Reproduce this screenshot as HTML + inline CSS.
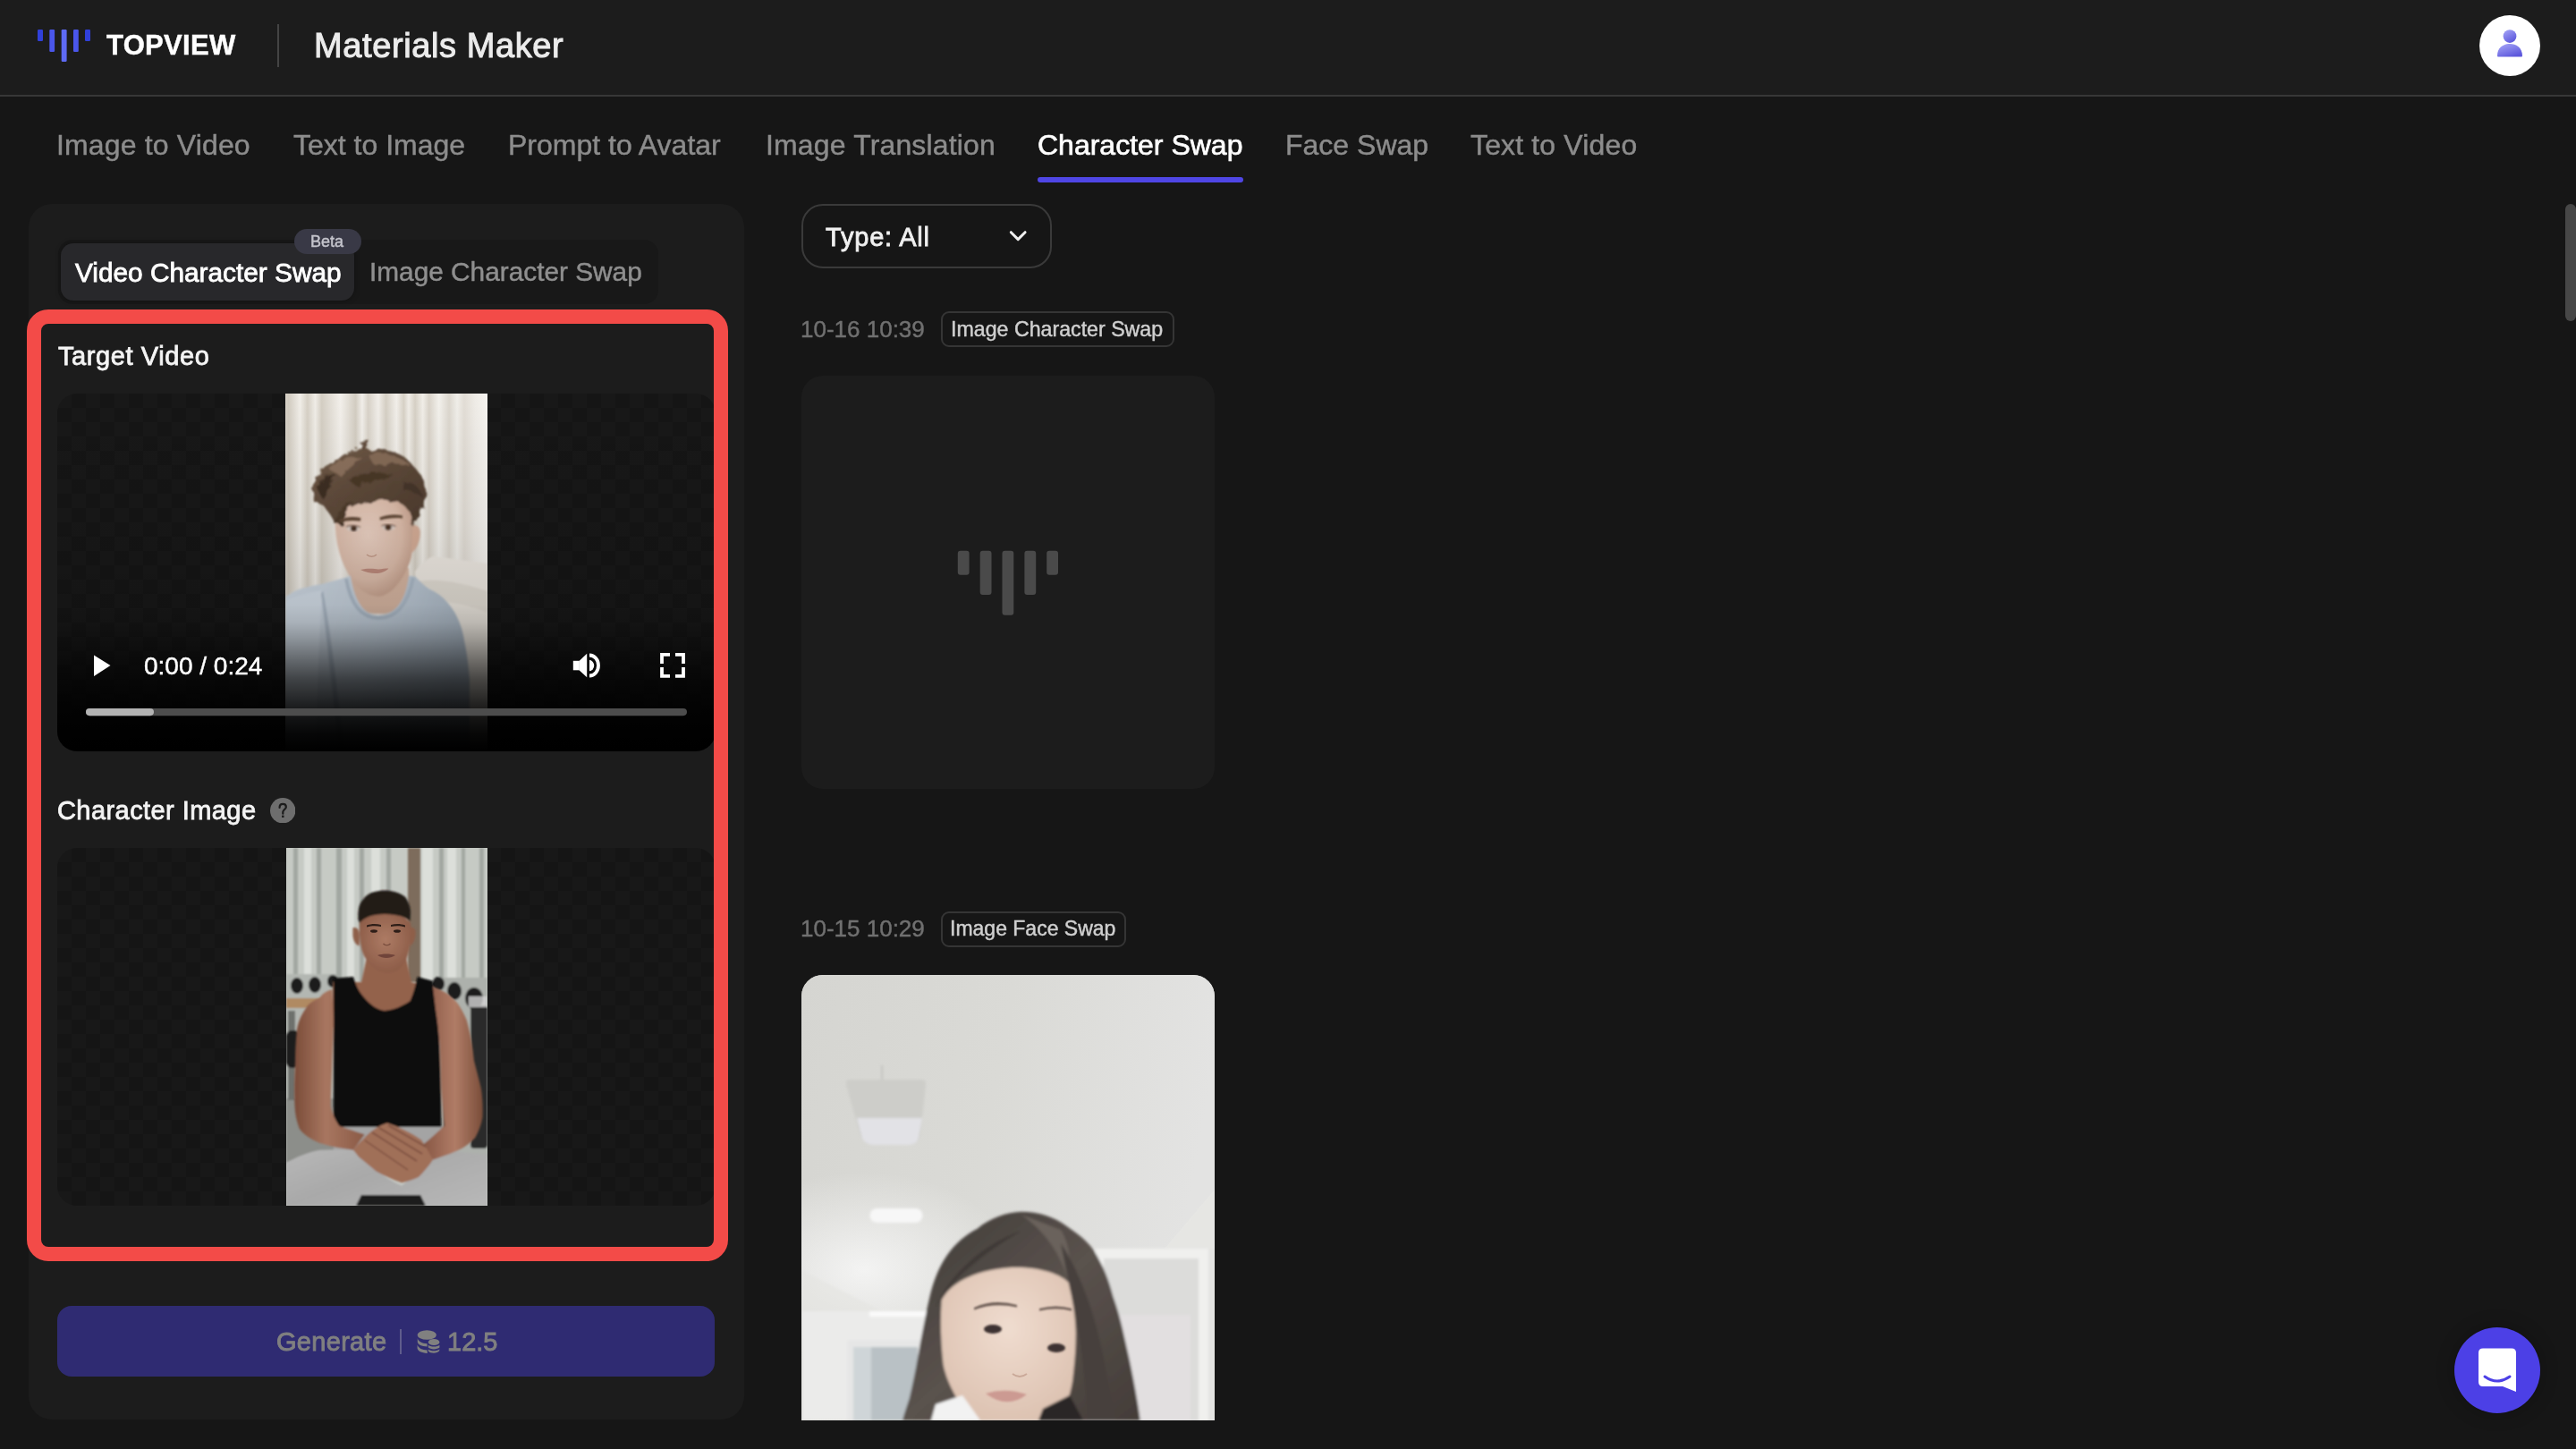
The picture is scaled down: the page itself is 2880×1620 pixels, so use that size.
<!DOCTYPE html>
<html><head><meta charset="utf-8">
<style>
*{margin:0;padding:0;box-sizing:border-box}
html,body{width:2880px;height:1620px;overflow:hidden;background:#161616;font-family:"Liberation Sans",sans-serif;color:#fff;-webkit-font-smoothing:antialiased}
.t{will-change:transform;-webkit-text-stroke-width:0.45px}
.a{position:absolute}
.t{position:absolute;white-space:nowrap;line-height:1}
#hdr{left:0;top:0;width:2880px;height:108px;background:#1c1c1c;border-bottom:2px solid #373737}
#panel{left:32px;top:228px;width:800px;height:1359px;background:#1c1c1c;border-radius:26px}
#seg{left:65px;top:268px;width:671px;height:72px;background:#181818;border-radius:16px}
#segact{left:68px;top:272px;width:328px;height:64px;background:#28282b;border-radius:14px;box-shadow:0 0 6px rgba(0,0,0,.35)}
#beta{left:329px;top:256px;width:75px;height:28px;background:#393946;border-radius:14px}
#red{left:30px;top:346px;width:784px;height:1064px;border:16px solid #f34b48;border-radius:24px}
.vbox{left:64px;width:736px;height:400px;border-radius:22px;overflow:hidden;background-color:#161616;background-image:conic-gradient(#151515 0deg 90deg,#181818 90deg 180deg,#151515 180deg 270deg,#181818 270deg 360deg);background-size:32px 32px;background-position:0 0}
#gen{left:64px;top:1460px;width:735px;height:79px;background:#2f2b72;border-radius:16px}
#dd{left:896px;top:228px;width:280px;height:72px;border:2px solid #3a3a3a;border-radius:24px}
.badge{height:40px;border:2px solid #353535;border-radius:9px}
#card1{left:896px;top:420px;width:462px;height:462px;background:#1c1c1c;border-radius:24px}
#card2{left:896px;top:1090px;width:462px;height:498px;border-radius:24px 24px 0 0;overflow:hidden;background:#dcdcd8}
#scroll{left:2868px;top:228px;width:12px;height:131px;background:#474747;border-radius:6px}
#chat{left:2744px;top:1484px;width:96px;height:96px;border-radius:50%;background:#4c40e6;box-shadow:0 0 20px rgba(0,0,0,.25)}
#avatar{left:2772px;top:17px;width:68px;height:68px;border-radius:50%;background:#fff}
</style></head><body>
<div id="hdr" class="a"></div>
<!-- logo -->
<svg class="a" style="left:0;top:0" width="110" height="80" viewBox="0 0 110 80">
<rect x="42" y="33" width="6" height="13" rx="1.2" fill="#3040da"/>
<rect x="55.3" y="33" width="5.8" height="25" rx="1.2" fill="#4a56ea"/>
<rect x="68.7" y="33" width="5.9" height="36" rx="1.2" fill="#5e6af5"/>
<rect x="82" y="33" width="5.8" height="25" rx="1.2" fill="#4a56ea"/>
<rect x="95" y="33" width="6" height="13" rx="1.2" fill="#3040da"/>
</svg>
<div class="t" style="left:118.5px;top:35px;font-size:31px;font-weight:700;letter-spacing:0.3px">TOPVIEW</div>
<div class="a" style="left:310px;top:27px;width:2px;height:48px;background:#444"></div>
<div class="t" style="left:351px;top:32px;font-size:38px;letter-spacing:0.6px;-webkit-text-stroke:1px #ececec;color:#ececec">Materials Maker</div>
<div id="avatar" class="a"></div>
<svg class="a" style="left:2772px;top:17px" width="68" height="68" viewBox="0 0 68 68">
<defs><linearGradient id="av" x1="0" y1="0" x2="0.6" y2="1"><stop offset="0" stop-color="#a8a8f8"/><stop offset="1" stop-color="#5d58dc"/></linearGradient></defs>
<circle cx="34" cy="23.6" r="7.4" fill="url(#av)"/>
<path d="M20 45.5 C20 36 27 32 34 32 C41 32 48 36 48 45.5 Q48 46.5 47 46.5 L21 46.5 Q20 46.5 20 45.5Z" fill="url(#av)"/>
</svg>

<!-- nav tabs -->
<div class="t" style="left:63px;top:146px;font-size:32px;letter-spacing:0.15px;color:#8c8c8c">Image to Video</div>
<div class="t" style="left:328px;top:146px;font-size:32px;color:#8c8c8c">Text to Image</div>
<div class="t" style="left:568px;top:146px;font-size:32px;color:#8c8c8c">Prompt to Avatar</div>
<div class="t" style="left:855.5px;top:146px;font-size:32px;letter-spacing:0.15px;color:#8c8c8c">Image Translation</div>
<div class="t" style="left:1160px;top:146px;font-size:32px;-webkit-text-stroke-width:0.7px;color:#fff">Character Swap</div>
<div class="t" style="left:1437px;top:146px;font-size:32px;color:#8c8c8c">Face Swap</div>
<div class="t" style="left:1644px;top:146px;font-size:32px;color:#8c8c8c;letter-spacing:0.15px">Text to Video</div>
<div class="a" style="left:1160px;top:198px;width:230px;height:6px;background:#4f46e5;border-radius:3px"></div>

<div id="panel" class="a"></div>
<div id="seg" class="a"></div>
<div id="segact" class="a"></div>
<div class="t" style="left:83.5px;top:290px;font-size:29.8px;-webkit-text-stroke-width:0.8px;color:#fff">Video Character Swap</div>
<div class="t" style="left:413px;top:289px;font-size:29.8px;color:#8f8f8f">Image Character Swap</div>
<div id="beta" class="a"></div>
<div class="t" style="left:346.5px;top:261px;font-size:18px;color:#c4c4cc">Beta</div>

<div class="t" style="left:65px;top:384px;font-size:29px;letter-spacing:0.6px;-webkit-text-stroke-width:0.8px;color:#f4f4f4">Target Video</div>
<div class="a vbox" style="top:440px">
 <svg class="a" style="left:255px;top:0" width="226" height="400" viewBox="0 0 226 400">
  <defs>
   <linearGradient id="cur" x1="0" x2="226" y1="0" y2="0" gradientUnits="userSpaceOnUse">
    <stop offset="0" stop-color="#d8d2c8"/><stop offset="0.016" stop-color="#d2ccc1"/><stop offset="0.073" stop-color="#f1eee8"/>
    <stop offset="0.11" stop-color="#d6d0c5"/><stop offset="0.148" stop-color="#f0ede7"/><stop offset="0.18" stop-color="#d4cec3"/>
    <stop offset="0.273" stop-color="#f3f0eb"/><stop offset="0.348" stop-color="#d3cdc2"/><stop offset="0.38" stop-color="#f2efea"/>
    <stop offset="0.41" stop-color="#d8d2c8"/><stop offset="0.46" stop-color="#f1eee9"/><stop offset="0.498" stop-color="#d5cfc4"/>
    <stop offset="0.55" stop-color="#f2efea"/><stop offset="0.586" stop-color="#d7d1c6"/><stop offset="0.61" stop-color="#f0ede7"/>
    <stop offset="0.642" stop-color="#d6d0c5"/><stop offset="0.68" stop-color="#f1eee8"/><stop offset="0.711" stop-color="#d9d3c9"/>
    <stop offset="0.76" stop-color="#f3f1ec"/><stop offset="0.81" stop-color="#dcd7ce"/><stop offset="0.85" stop-color="#f0eee9"/>
    <stop offset="0.885" stop-color="#e2ddd5"/><stop offset="0.94" stop-color="#efece7"/><stop offset="1" stop-color="#f6f4f0"/>
   </linearGradient>
   <linearGradient id="shirt" x1="0" y1="0" x2="1" y2="0.3"><stop offset="0" stop-color="#d0dae4"/><stop offset="0.55" stop-color="#c0ccd8"/><stop offset="1" stop-color="#a6b3c0"/></linearGradient>
   <radialGradient id="face1" cx="0.42" cy="0.42" r="0.65"><stop offset="0" stop-color="#e9d0c2"/><stop offset="0.65" stop-color="#dcbcaa"/><stop offset="1" stop-color="#c09a86"/></radialGradient>
   <linearGradient id="hair1" x1="0" y1="0" x2="1" y2="1"><stop offset="0" stop-color="#735c4a"/><stop offset="0.45" stop-color="#5e4a3a"/><stop offset="1" stop-color="#4c3a2c"/></linearGradient>
   <filter id="bl1" x="-10%" y="-10%" width="120%" height="120%"><feGaussianBlur stdDeviation="0.9"/></filter>
   <filter id="bl1b" x="-10%" y="-10%" width="120%" height="120%"><feGaussianBlur stdDeviation="1.2"/></filter><filter id="hairf" x="-20%" y="-20%" width="140%" height="140%"><feTurbulence type="fractalNoise" baseFrequency="0.12" numOctaves="2" seed="3"/><feDisplacementMap in="SourceGraphic" scale="7"/><feGaussianBlur stdDeviation="0.7"/></filter>
  </defs>
  <rect width="226" height="400" fill="url(#cur)"/>
  <g filter="url(#bl1b)">
   <path d="M145 199 C152 190 160 183 166 182 L226 190 L226 400 L150 400Z" fill="#eee9e2"/>
   <path d="M149 210 C170 206 200 212 226 221 L226 400 L160 400Z" fill="#e2ddd4"/>
   <path d="M163 232 C185 232 210 238 226 245 L226 400 L170 400Z" fill="#ebe6de"/>
  </g>
  <g filter="url(#bl1)">
  <path d="M73 195 L70 232 C85 250 120 252 140 232 L138 195Z" fill="#d6b5a1"/>
  <path d="M55.5 142 C56 165 60 187 75.9 210 C82 219 92 226 104 227 C112 226 120 221 128 210 C135 200 140 188 141 181.7 C143 170 144 160 143.8 153.4 C143 140 143 132 142 126 C130 112 115 108 98.5 108 C80 108 64 116 56 128Z" fill="url(#face1)"/>
  <path d="M142.4 147.8 C147 146 151 150 150.8 156 C150.5 163 149 168 146 173 C144 176 142 178 140.5 178Z" fill="#d4ac96"/>
  <g filter="url(#hairf)"><path d="M33.4 122.3 C31 115 30 108 32 102 C33 97 35 93 38 90 C40 85 44 81 49 79 C52 76 56 74 60 73 C63 69 68 66 74 66 C76 62 80 60 84 61 C88 59 92 61 96 64 C101 62 107 62 112.6 64 C118 64 124 66 129.6 69 C135 72 140 77 144 82 C148 86 152 91 154 97 C157 103 158 109 157 115 C156 121 154 125 152.3 129 C150 134 148 138 146.6 142 L141 147.8 C141 142 140.5 138 139.5 133.6 C137 130 135 127 132.5 125 C128 122 123 121 118 121 C111 119 104 119 98 120 C92 121 87 122 82 123 C76 125 72 128 69 132 C66 136 63 140 61 146 C59 142 57 140 55 146 C54 141 52 138 50.4 136.5 C47 131 45 127 42 125 C38 123 36 123 33.4 122.3Z" fill="url(#hair1)"/>
  <path d="M55 146 C57 134 64 124 76 119 C70 128 66 138 64 150 C61 146 58 145 55 146Z" fill="#4e3b2c"/>
  <path d="M48 84 C58 74 72 70 86 72 C78 76 70 82 62 92 C56 88 52 86 48 84Z" fill="#8a705c"/>
  <path d="M92 68 C108 64 126 68 140 80 C128 78 114 78 100 80 C96 76 94 72 92 68Z" fill="#846a56"/>
  <path d="M36 108 C40 96 48 90 56 90 C50 98 46 108 44 120 C40 116 37 112 36 108Z" fill="#3e2e22"/>
  <path d="M70 96 C85 88 105 86 122 92 C110 94 95 96 80 104Z" fill="#4a3828"/>
  <path d="M130 100 C140 96 150 104 154 116 C148 112 140 108 132 108Z" fill="#45352a"/>
  <path d="M84 61 C86 55 90 52 94 53 C92 57 90 60 88 63Z" fill="#5e4a3a"/>
  </g>
  <path d="M0.3 227 C8 222 14 219 16.5 218.5 C25 216 35 214 42 212.8 C52 210 60 208 66 206 C68 205 71 204 73 204 C78 236 90 248 104 248 C120 248 134 236 138 204 C141 204 143 204 145.2 204.4 C150 210 156 215 160.7 218.5 C168 222 173 225 177.7 229.8 C184 236 188 242 191.9 249.6 C196 258 199 268 200.4 278 C203 290 205 305 206 320 L206 400 L0 400Z" fill="url(#shirt)"/>
  <path d="M0 232 C12 226 28 222 42 220 C38 260 36 320 34 400 L0 400Z" fill="#d3dde7"/>
  <path d="M42 220 C50 260 58 330 66 400 L60 400 C52 330 46 270 40 224Z" fill="#aab7c5"/>
  <path d="M68 207 C74 240 88 251 104 251 C122 251 136 240 143 206" fill="none" stroke="#aab8c6" stroke-width="4"/>
  </g>
  <g fill="#5e4636" filter="url(#bl1)">
   <path d="M60 141.5 C68 137.5 76 137.5 84.4 139 L84 142.5 C76 141.5 68 141.5 60.5 144.5Z"/>
   <path d="M105.6 138.5 C114 135.5 122 134.5 131 136.5 L131 139.5 C122 138.5 114 139.5 106 141.5Z"/>
  </g>
  <g filter="url(#bl1)">
   <ellipse cx="76" cy="151" rx="7.5" ry="3.2" fill="#dccdc4"/>
   <ellipse cx="115.5" cy="149.8" rx="7.5" ry="3.2" fill="#dccdc4"/>
   <ellipse cx="76.5" cy="151" rx="3.6" ry="3" fill="#4a3024"/>
   <ellipse cx="115" cy="149.8" rx="3.6" ry="3" fill="#4a3024"/>
   <path d="M68 149 Q76 146 84 149.5" stroke="#6a4e40" stroke-width="1.2" fill="none"/>
   <path d="M107.5 148 Q115.5 145 123.5 148.5" stroke="#6a4e40" stroke-width="1.2" fill="none"/>
  </g>
  <path d="M84 197 C92 195 100 196 104 196.5 C108 196 112 195.5 115.5 195.5 C110 202 96 203 84 197Z" fill="#bd8a7c"/>
  <path d="M91 180 C94 183 99 183 102 180" fill="none" stroke="#c49c8a" stroke-width="1.6"/>
 </svg>
 <div class="a" style="left:0;top:0;width:736px;height:400px;background:linear-gradient(to bottom,rgba(0,0,0,0) 0%,rgba(0,0,0,.06) 35%,rgba(0,0,0,.13) 59%,rgba(0,0,0,.2) 64%,rgba(0,0,0,.35) 69%,rgba(0,0,0,.53) 74.5%,rgba(0,0,0,.7) 80%,rgba(0,0,0,.81) 85%,rgba(0,0,0,.88) 88%,rgba(0,0,0,.97) 95%,#000 100%)"></div>
 <svg class="a" style="left:0;top:0" width="736" height="400" viewBox="0 0 736 400">
  <path d="M41 292.5 L41 316 L59.5 304Z" fill="#fff"/>
  <rect x="576.8" y="298.8" width="7" height="10.5" fill="#fff"/>
  <path d="M583.5 299 L592.2 290.8 L592.2 317.2 L583.5 309.3Z" fill="#fff"/>
  <path d="M595 297.8 A6 6.3 0 0 1 595 310.3Z" fill="#fff"/>
  <path d="M595 292.5 A10 11.5 0 0 1 595 315.5" fill="none" stroke="#fff" stroke-width="3.8"/>
  <path d="M676 302 V291.8 H685 M691 291.8 H700 V302 M700 306 V315.8 H691 M685 315.8 H676 V306" fill="none" stroke="#fff" stroke-width="3.8"/>
  <rect x="32" y="352" width="672" height="8.2" rx="4.1" fill="#4d4d4d"/>
  <rect x="32" y="352" width="76" height="8.2" rx="4.1" fill="#b3b3b3"/>
 </svg>
 <div class="t" style="left:96.5px;top:291px;font-size:28px;color:#fff">0:00 / 0:24</div>
</div>

<div class="t" style="left:64px;top:892px;font-size:29px;letter-spacing:0.43px;-webkit-text-stroke-width:0.8px;color:#f4f4f4">Character Image</div>
<svg class="a" style="left:301.8px;top:891.6px" width="28.4" height="28.4" viewBox="0 0 28 28">
 <circle cx="14" cy="14" r="14" fill="#6e6e6e"/>
 <path d="M10.4 10.8 C10.4 8 12.1 6.7 14 6.7 C16.1 6.7 17.6 8.1 17.6 10 C17.6 12.3 14.1 13.4 14.1 15.6 L14.1 17.4" fill="none" stroke="#1c1c1c" stroke-width="2.2" stroke-linecap="round"/><rect x="12.9" y="19.3" width="2.4" height="2.4" fill="#1c1c1c"/>
</svg>
<div class="a vbox" style="top:948px">
 <svg class="a" style="left:256px;top:0" width="225" height="400" viewBox="0 0 225 400">
  <defs>
   <linearGradient id="skinL" x1="0" x2="1" y1="0" y2="0"><stop offset="0" stop-color="#7a4c39"/><stop offset="0.45" stop-color="#a87660"/><stop offset="1" stop-color="#8a5a46"/></linearGradient>
   <linearGradient id="skinR" x1="0" x2="1" y1="0" y2="0"><stop offset="0" stop-color="#855543"/><stop offset="0.55" stop-color="#b07c66"/><stop offset="1" stop-color="#7a4d3a"/></linearGradient>
   <linearGradient id="pants" x1="0" y1="0" x2="1" y2="1"><stop offset="0" stop-color="#bdbdbd"/><stop offset="0.5" stop-color="#a9a9a9"/><stop offset="1" stop-color="#b8b8b8"/></linearGradient>
   <radialGradient id="face2" cx="0.5" cy="0.45" r="0.6"><stop offset="0" stop-color="#ad7b64"/><stop offset="1" stop-color="#8a5a46"/></radialGradient>
   <filter id="bl2" x="-10%" y="-10%" width="120%" height="120%"><feGaussianBlur stdDeviation="0.8"/></filter>
  </defs>
  <rect width="225" height="400" fill="#c6cac4"/>
  <g filter="url(#bl2)">
   <g fill="#a2a7a2">
    <rect x="8" y="0" width="5" height="150"/><rect x="34" y="0" width="5" height="150"/><rect x="56" y="0" width="6" height="150"/>
    <rect x="82" y="0" width="5" height="150"/><rect x="112" y="0" width="5" height="150"/>
    <rect x="171" y="0" width="5" height="150"/><rect x="196" y="0" width="4" height="150"/><rect x="216" y="0" width="5" height="150"/>
   </g>
   <g fill="#dcdfda">
    <rect x="20" y="0" width="8" height="150"/><rect x="68" y="0" width="8" height="150"/><rect x="95" y="0" width="10" height="150"/><rect x="152" y="0" width="12" height="150"/><rect x="180" y="0" width="10" height="150"/>
   </g>
   <rect x="136" y="0" width="14" height="150" fill="#7d6c5c"/>
   <rect x="0" y="141" width="56" height="212" fill="#b3b7b2"/>
   <rect x="164" y="145" width="61" height="200" fill="#adb1ac"/>
   <rect x="0" y="168" width="40" height="11" fill="#b08a62"/>
   <rect x="0" y="280" width="56" height="72" fill="#8c8e8a"/>
   <g fill="#1c1c1c">
    <ellipse cx="12" cy="154" rx="7" ry="9"/><ellipse cx="32" cy="153" rx="7" ry="9"/><ellipse cx="52" cy="149" rx="6" ry="7"/>
    <rect x="2" y="182" width="8" height="100" fill="#6e716d"/>
    <rect x="0" y="204" width="16" height="42" rx="6"/>
    <ellipse cx="170" cy="152" rx="7" ry="8"/><ellipse cx="188" cy="160" rx="8" ry="10"/><ellipse cx="210" cy="168" rx="10" ry="12"/>
    <rect x="206" y="176" width="19" height="160" rx="4" fill="#2a2a2a"/>
    <rect x="176" y="250" width="14" height="70" rx="5"/>
   </g>
   <rect x="204" y="166" width="20" height="12" fill="#d6d6d6" opacity="0.8"/>
  </g>
  <g filter="url(#bl2)">
   
   <path d="M90 122 L134 122 L140 150 L166 156 L170 200 L52 200 L52 150 L84 150Z" fill="#93624c"/>
   <path d="M52.9 145.7 L75 144 C78 154 82 162 87.8 167.9 C95 176 102 181 110 182 C120 181 130 177 138.6 171 C142 163 145 153 146.5 144 L164 148.8 C166 165 168 182 170.3 199.6 C172 230 173 270 173.5 310.7 L173.5 314 L52.9 314 C52.9 270 52.9 230 52.9 193.3Z" fill="#0e0e0e"/>
   <path d="M52.9 312 L173.5 312 L173.5 345 L52.9 345Z" fill="#a4a4a4"/>
   <path d="M0 352 C12 345 25 340 37 337.7 C50 337 62 337 75 337.7 C92 352 110 370 129 377.4 C142 368 153 358 164 348.8 C168 340 171 327 173.5 313.9 C178 326 183 334 189.4 339.3 C201 341 213 342 225 342.5 L225 400 L0 400Z" fill="url(#pants)"/>
   <path d="M51.3 158.3 C44 160 40 164 37 167.9 C29 171 24 175 21.1 180.6 C15 190 12.5 198 11.6 206 C10.5 218 10 228 10 237.7 C9.5 250 9 260 9 269.5 C9 280 9.5 288 10 294.9 C11 302 12.5 308 14.8 313.9 C20 321 28 326 37 329.8 C50 334 62 336 75 337.7 L87.8 320.3 C78 317 68 314 59.2 310.7 C54 303 51 296 49.7 288.5 C50 270 51 255 51.3 237.7 C52 222 52.5 208 52.9 193.3Z" fill="url(#skinL)"/>
   <path d="M164 155.2 C172 158 180 162 186.2 167.9 C193 174 198 183 202 193.3 C206 208 208.5 222 210 237.7 C213 250 216 260 218 269.5 C219.5 280 220 290 219.5 301.2 C218 310 215 317 211.6 323.4 C205 331 197 336 189.4 339.3 C181 343 172 346 164 348.8 L151.3 333 C160 326 169 318 176.7 310.7 C175.5 296 174.5 283 173.5 269.5 C173 253 172.5 238 171.9 221.8 C170.5 207 169 193 167 180.6Z" fill="url(#skinR)"/>
   <path d="M75 337.7 C88 322 100 311 113 307.6 C126 312 139 318 151.3 326.6 C156 334 160 341 164 348.8 C159 356 154 362 148 367.9 C142 371 135 373 129 374.2 C119 371 109 366 100.5 361.5 C94 356 87 350 81.4 345.7Z" fill="#a06f59"/>
   <path d="M96 318 L146 350 M104 313 L152 342 M88 327 L136 360 M114 310 L156 334" stroke="#7a4e3e" stroke-width="1.5" fill="none"/>
   <path d="M84 388 L150 388 L156 400 L78 400Z" fill="#1e1e1e"/>
   <path d="M81.7 83.7 C82 92 82 100 83 106.6 C84 114 86 120 88.9 123.8 C93 130 97 134 101.7 136.7 C105 138.5 109 139.6 113.2 139.6 C117 139.6 121 138.5 124.7 136.7 C129 133 132 129 134.7 123.8 C137 118 138 112 139 106.6 C140 98 140 90 139 83.7 C132 76 122 72 110 72 C98 72 88 76 81.7 83.7Z" fill="url(#face2)"/>
   <path d="M80.5 80 C80 68 82 62 85.5 57.9 C89 53 94 50 99 49 C104 47.5 110 47 116 47.9 C123 49 129 51 133.3 55 C137 60 139 66 139 72 L138.5 82 C134 77 125 74.5 110 74 C96 74.5 88 77 82 84Z" fill="#221b18"/>
   <path d="M74.5 89.4 C78 88 81 90 81.7 95 C82 100 82 106 81.7 109.5 C78 109 75 104 74.5 98Z" fill="#8e5e49"/>
   <path d="M139 89.4 C142 88 144.7 90 144.7 95 C144.7 101 143 106 139 109.5Z" fill="#8e5e49"/>
  </g>
  <g fill="#2e1e18">
   <path d="M90 86.5 C95 84.5 101 84.5 106 86 L106 88 C101 87 95 87 90 88.5Z"/>
   <path d="M117 86 C122 84.5 128 84.5 133 86.5 L133 88.5 C128 87 122 87 117 88Z"/>
   <ellipse cx="98" cy="93" rx="4" ry="1.8"/><ellipse cx="124" cy="93" rx="4" ry="1.8"/>
  </g>
  <path d="M108.5 107 C110.5 109.5 114.5 109.5 116.5 107" fill="none" stroke="#7a4e3e" stroke-width="1.3"/>
  <path d="M102 120 C108 118 116 118 122 120 C116 124 108 124 102 120Z" fill="#70443a"/>
 </svg>
</div>

<div id="red" class="a"></div>

<div id="gen" class="a"></div>
<div class="t" style="left:309px;top:1486px;font-size:29px;letter-spacing:0.3px;-webkit-text-stroke:0.9px #808080;color:#808080">Generate</div>
<div class="a" style="left:447px;top:1486px;width:2px;height:28px;background:#5f5c8c"></div>
<svg class="a" style="left:466px;top:1487px" width="27" height="27" viewBox="0 0 27 27">
 <g fill="#808080">
 <ellipse cx="11.3" cy="5.5" rx="10.6" ry="5.3"/>
 <path d="M0.8 9.2 C2 13.2 6 14.8 11.6 15.2 L11.6 18.6 C5 18.4 1.5 16.5 0.8 13.6Z"/>
 <path d="M0.6 16.4 C2 20.4 6 22.2 11.6 22.4 L11.8 26 C5 25.8 1.2 23.4 0.6 20.6Z"/>
 <ellipse cx="19.1" cy="13.5" rx="6.3" ry="3.6"/>
 <path d="M12.8 16.8 C15 19.2 23 19.2 25.4 16.8 L25.4 19.6 C23 22 15 22 12.8 19.6Z"/>
 <path d="M12.8 21.4 C15 23.8 23 23.8 25.4 21.4 L25.2 23.2 C23 26.4 15 26.4 12.9 23.4Z"/>
 </g>
</svg>
<div class="t" style="left:499.5px;top:1486px;font-size:29px;-webkit-text-stroke:0.9px #808080;color:#808080">12.5</div>

<!-- right -->
<div id="dd" class="a"></div>
<div class="t" style="left:922.5px;top:251px;font-size:29px;letter-spacing:0.8px;-webkit-text-stroke-width:0.8px;color:#f0f0f0">Type: All</div>
<svg class="a" style="left:1126px;top:255px" width="24" height="18" viewBox="0 0 24 18">
 <path d="M4.3 4.7 L12.2 12.6 L20.1 4.7" fill="none" stroke="#f0f0f0" stroke-width="3" stroke-linecap="round" stroke-linejoin="round"/>
</svg>

<div class="t" style="left:895px;top:355px;font-size:26px;color:#707070">10-16 10:39</div>
<div class="a badge" style="left:1052px;top:348px;width:261px"></div>
<div class="t" style="left:1063px;top:357px;font-size:23.2px;color:#d0d0d0">Image Character Swap</div>
<div id="card1" class="a"></div>
<svg class="a" style="left:896px;top:420px" width="462" height="462" viewBox="0 0 462 462">
 <g fill="#4a4a4a">
 <rect x="174.8" y="195.7" width="12.8" height="27" rx="3"/>
 <rect x="199.7" y="195.7" width="12.8" height="49.3" rx="3"/>
 <rect x="224.5" y="195.7" width="12.8" height="72" rx="3"/>
 <rect x="249.4" y="195.7" width="12.8" height="49.3" rx="3"/>
 <rect x="274.2" y="195.7" width="12.8" height="27" rx="3"/>
 </g>
</svg>

<div class="t" style="left:895px;top:1025px;font-size:26px;color:#707070">10-15 10:29</div>
<div class="a badge" style="left:1051.5px;top:1018.5px;width:207px"></div>
<div class="t" style="left:1062px;top:1027px;font-size:23px;color:#d0d0d0">Image Face Swap</div>
<div id="card2" class="a">
 <svg class="a" style="left:0;top:0" width="462" height="498" viewBox="0 0 462 498">
  <defs>
   <linearGradient id="ceil" x1="0" y1="0" x2="1" y2="0.2"><stop offset="0" stop-color="#d5d5d1"/><stop offset="0.5" stop-color="#dadad6"/><stop offset="1" stop-color="#e3e3e2"/></linearGradient>
   <linearGradient id="hair3" x1="0" y1="0" x2="1" y2="1"><stop offset="0" stop-color="#3f3a37"/><stop offset="0.5" stop-color="#5a524d"/><stop offset="1" stop-color="#433c38"/></linearGradient>
   <radialGradient id="face3" cx="0.5" cy="0.4" r="0.65"><stop offset="0" stop-color="#efdccf"/><stop offset="1" stop-color="#dcc1b0"/></radialGradient>
   <filter id="bl3" x="-10%" y="-10%" width="120%" height="120%"><feGaussianBlur stdDeviation="1.5"/></filter><filter id="bl3s" x="-20%" y="-20%" width="140%" height="140%"><feGaussianBlur stdDeviation="0.8"/></filter><radialGradient id="haze" cx="0.5" cy="0.5" r="0.5"><stop offset="0" stop-color="#fafafa" stop-opacity="0.8"/><stop offset="1" stop-color="#fafafa" stop-opacity="0"/></radialGradient>
  </defs>
  <rect width="462" height="498" fill="url(#ceil)"/><ellipse cx="70" cy="330" rx="170" ry="110" fill="url(#haze)"/><path d="M406 306 L462 240 L462 306Z" fill="#e8e8e6"/>
  <g filter="url(#bl3)">
  <path d="M0 330 L0 498 L462 498 L462 240 L406 306 L330 306 L330 498Z" fill="#e4e4e1" opacity="0.6"/>
  <rect x="329" y="306" width="126" height="192" fill="#f0f0ee"/>
  <rect x="338" y="317" width="106" height="181" fill="#dcdcda"/>
  <rect x="350" y="380" width="85" height="118" fill="#e2dfe0"/>
  <rect x="1" y="376" width="140" height="122" fill="#ebebea"/>
  <rect x="51" y="408" width="85" height="90" fill="#e6e6e6"/>
  <rect x="58" y="416" width="72" height="82" fill="#b9c1c5"/>
  <rect x="58" y="416" width="20" height="82" fill="#cfd5d8"/>
  <rect x="76" y="376" width="65" height="6" fill="#fafafa"/>
  <path d="M90.3 101 L90.3 118" stroke="#bdbdb9" stroke-width="1.5"/><path d="M54 117 L134 117 Q140 117 139 123 L133 178 Q131 190 120 190 L80 190 Q70 190 66 180 L50 123 Q49 117 54 117Z" fill="#cdcdc9"/>
  <path d="M62 160 L135 160 L131 182 Q129 190 120 190 L80 190 Q72 190 68 183Z" fill="#e2e2e6"/>
  <rect x="76.5" y="261" width="59" height="16" rx="8" fill="#f7f7f7"/>
  <path d="M196.6 283.7 C210 272 230 265 246 264.7 C265 265 282 270 295.3 280 C310 290 320 298 325.7 306.5 C338 325 344 342 348.5 359.6 C356 380 360 400 363.7 416.6 C368 435 372 455 375 473.5 C377 485 378 492 378.8 498 L113 498 C115 490 118 482 120.7 473.5 C125 455 129 435 132 416.6 C136 395 140 375 143.5 359.6 C148 340 155 325 162.4 314 C172 300 184 290 196.6 283.7Z" fill="url(#hair3)"/>
  <path d="M156.7 363.4 C166 346 190 330 235 327 C265 326 290 334 299.1 344.5 C303 362 306 380 306.7 397.6 C307 418 305 437 303 454.6 C300 472 295 486 287.7 498 L196.6 498 C186 490 180 482 173.8 473.5 C166 460 161 448 158.6 435.6 C156 412 155 388 156.7 363.4Z" fill="url(#face3)"/>
  <path d="M150 372 C165 335 205 300 246 286 C222 300 195 318 176 338 C166 348 158 358 150 372Z" fill="#3e3835"/><path d="M246 268 C270 285 290 310 299.1 344.5 C303 330 300 300 290 285Z" fill="#6a625c"/>
  <path d="M290 300 C310 330 330 380 340 440 C345 470 350 490 352 498 L320 498 C318 460 312 400 300 350Z" fill="#47403c"/>
  <path d="M150 480 L180 470 L200 498 L145 498Z" fill="#f2f2f2"/>
  <path d="M270 485 L300 470 L315 498 L265 498Z" fill="#2a2626"/>
  </g>
  <g fill="#6a5a52" filter="url(#bl3s)">
   <path d="M193 372 Q215 362 241 369 L241 371.5 Q215 366 193 374.5Z"/>
   <path d="M266 373 Q285 368 302 373 L302 375.5 Q285 371 266 375.5Z"/>
  </g>
  <g fill="#3e3230" filter="url(#bl3s)">
   <ellipse cx="214" cy="396" rx="10" ry="5"/><ellipse cx="285" cy="417" rx="10" ry="5"/>
  </g>
  <path d="M236 446 Q244 452 252 446" fill="none" stroke="#caa999" stroke-width="2"/>
  <path d="M206 468 Q228 461 252 469 Q230 486 206 468Z" fill="#cc9a92" filter="url(#bl3s)"/>
 </svg>
</div>

<div id="scroll" class="a"></div>
<div id="chat" class="a"></div>
<svg class="a" style="left:2744px;top:1484px" width="96" height="96" viewBox="0 0 96 96">
 <path d="M32 23.5 H64 Q69 23.5 69 28.5 V72 L54 66 H32 Q27 66 27 61 V28.5 Q27 23.5 32 23.5Z" fill="#fff"/>
 <path d="M34 55 Q48 65 62 55" fill="none" stroke="#4c40e6" stroke-width="3" stroke-linecap="round"/>
</svg>
</body></html>
